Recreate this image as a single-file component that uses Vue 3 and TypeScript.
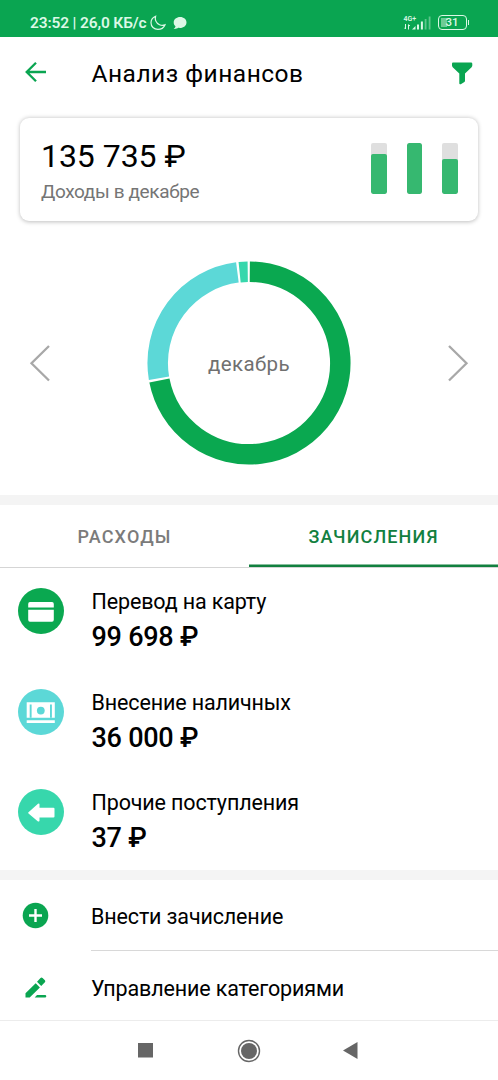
<script setup lang="ts">
interface Income {
  id: 'card' | 'cash' | 'other'
  label: string
  amount: string
}

interface Segment {
  path: string
  color: string
}

const incomes: Income[] = [
  { id: 'card', label: 'Перевод на карту', amount: '99 698 ₽' },
  { id: 'cash', label: 'Внесение наличных', amount: '36 000 ₽' },
  { id: 'other', label: 'Прочие поступления', amount: '37 ₽' },
]

const months: { name: string; level: number }[] = [
  { name: 'oct', level: 78.5 },
  { name: 'nov', level: 100 },
  { name: 'dec', level: 69.5 },
]

const CENTER = 102
const RADIUS = 91.3

function arc(from: number, to: number): string {
  const point = (deg: number): string => {
    const a = ((deg - 90) * Math.PI) / 180
    return `${(CENTER + RADIUS * Math.cos(a)).toFixed(2)} ${(CENTER + RADIUS * Math.sin(a)).toFixed(2)}`
  }
  return `M${point(from)}A${RADIUS} ${RADIUS} 0 ${to - from > 180 ? 1 : 0} 1 ${point(to)}`
}

const segments: Segment[] = [
  { path: arc(0.5, 258.9), color: '#0aa850' },
  { path: arc(260.4, 352.7), color: '#5cd8d7' },
  { path: arc(354.1, 359.2), color: '#37d7ac' },
]
</script>

<template>
  <div class="screen">
    <div class="status">
      <span class="clock">23:52 | 26,0 КБ/с</span>
      <svg class="moon" width="16" height="16" viewBox="0 0 16 16">
        <path d="M5.600 1.200C3 2.300 1 4.600 1 7.700C1 11.600 4 14.400 7.900 14.400C11.200 14.400 13.800 12.600 14.900 9.900C12.900 10.700 11.200 10.500 9.500 9.700C6.200 8.100 4.800 4.500 5.600 1.200Z" />
      </svg>
      <svg class="bubble" width="14" height="14" viewBox="0 0 14 14">
        <path d="M7.200 1C3.600 1 .7 3.300.7 6.400C.7 8 1.400 9.300 2.500 10.300C2.400 11.500 1.600 12.400.6 12.900C2.500 13.100 4.200 12.700 5.300 11.800C10 12.500 13.500 9.800 13.500 6.400C13.500 3.300 10.700 1 7.200 1Z" />
      </svg>
      <div class="status-right">
        <div class="net">
          <span class="gen">4G+</span>
          <svg width="8" height="6" viewBox="0 0 8 6"><path d="M1.500 0V5M.3 3.700L1.500 5M4.500 5.500V.7L6 2" /></svg>
        </div>
        <svg class="signal" width="20" height="15" viewBox="0 0 20 15">
          <path d="M0 14.500L3.500 11V14.500Z" />
          <rect x="5" y="9.500" width="2" height="5" />
          <rect x="8.900" y="6.500" width="2" height="8" />
          <rect x="12.700" y="4" width="1.800" height="10.500" opacity=".4" />
          <rect x="16.700" y="1.500" width="1.800" height="13" opacity=".4" />
        </svg>
        <div class="battery"><span class="charge"></span><span class="percent">31</span></div>
        <span class="tip"></span>
      </div>
    </div>

    <header class="header">
      <svg class="back" width="22" height="22" viewBox="0 0 22 22"><path d="M21 11H2M11 1.700L1.700 11L11 20.300" /></svg>
      <h1 class="title">Анализ финансов</h1>
      <svg class="filter" width="22" height="23" viewBox="0 0 22 23">
        <path d="M2 .5H20Q21.300.5 21.300 1.800V3.600Q21.300 4.500 20.600 5.200L14 11.500V18.800Q14 19.500 13.400 20L9.800 22.200Q8.300 22.800 8.300 21.300V11.500L1.700 5.200Q1 4.500 1 3.600V1.800Q1 .5 2 .5Z" />
      </svg>
    </header>

    <section class="card">
      <div>
        <div class="total">135 735 ₽</div>
        <div class="caption">Доходы в декабре</div>
      </div>
      <div class="bars">
        <div v-for="m in months" :key="m.name" class="bar">
          <div class="fill" :style="{ height: m.level + '%' }"></div>
        </div>
      </div>
    </section>

    <section class="chart">
      <svg class="chevron" width="22" height="38" viewBox="0 0 22 38"><path d="M20 2L2.500 19.300L20 36.500" /></svg>
      <div class="donut">
        <svg width="204" height="204" viewBox="0 0 204 204">
          <path v-for="s in segments" :key="s.color" :d="s.path" :stroke="s.color" />
        </svg>
        <span class="month">декабрь</span>
      </div>
      <svg class="chevron" width="22" height="38" viewBox="0 0 22 38"><path d="M2 2L19.500 19.300L2 36.500" /></svg>
    </section>

    <div class="band"></div>

    <nav class="tabs">
      <div class="tab">РАСХОДЫ</div>
      <div class="tab active">ЗАЧИСЛЕНИЯ</div>
    </nav>

    <section class="incomes">
      <div v-for="item in incomes" :key="item.id" class="income">
        <div class="badge" :class="'badge-' + item.id">
          <svg v-if="item.id === 'card'" width="46" height="46" viewBox="0 0 46 46">
            <path d="M12 14H34Q35.800 14 35.800 16V19.500H10.200V16Q10.200 14 12 14ZM10.200 21.800H35.800V31.800Q35.800 33.800 34 33.800H12Q10.200 33.800 10.200 31.800Z" />
          </svg>
          <svg v-else-if="item.id === 'cash'" width="46" height="46" viewBox="0 0 46 46">
            <path d="M8.700 13.300H36.800V28.700H8.700ZM8.700 31.300H36.800V33.900H8.700Z" />
            <path class="bill-mark" d="M11.700 15.500H13.600V28.700H11.700ZM32 15.500H33.900V28.700H32Z" />
            <circle class="bill-mark" cx="22.800" cy="21.600" r="3.900" />
          </svg>
          <svg v-else width="46" height="46" viewBox="0 0 46 46">
            <path d="M10.500 23.300L20 14.800Q21.500 14 21.500 15.500V18.800H35.500Q36.500 18.800 36.500 19.800V27.500Q36.500 28.500 35.500 28.500H21.500V31.500Q21.500 33 20 32.400L10.500 24.500Q9.700 23.900 10.500 23.300Z" />
          </svg>
        </div>
        <div class="texts">
          <div class="label">{{ item.label }}</div>
          <div class="amount">{{ item.amount }}</div>
        </div>
      </div>
    </section>

    <div class="band"></div>

    <section class="actions">
      <div class="action">
        <svg width="27" height="27" viewBox="0 0 27 27">
          <circle cx="13.500" cy="13.500" r="12.800" />
          <path class="plus" d="M13.500 7V20M7 13.500H20" />
        </svg>
        <span class="action-text add">Внести зачисление</span>
      </div>
      <div class="action manage">
        <svg width="27" height="27" viewBox="0 0 27 27">
          <path d="M3.500 22.500V18.300L13.700 8.200L17.900 12.400L7.700 22.500ZM15 6.700L18.500 3Q19.600 2.100 20.600 3L22.900 5.300Q23.800 6.300 22.900 7.300L19.200 11ZM15 20.100H23Q24.300 20.100 24.300 21.300T23 22.500H12.700Z" />
        </svg>
        <span class="action-text">Управление категориями</span>
      </div>
    </section>

    <footer class="navbar">
      <svg width="15" height="15" viewBox="0 0 15 15"><rect width="15" height="14.500" /></svg>
      <svg class="home" width="24" height="24" viewBox="0 0 24 24"><circle cx="12" cy="12" r="8" /><circle class="ring" cx="12" cy="12" r="10.500" /></svg>
      <svg width="15" height="17" viewBox="0 0 15 17"><path d="M0 8.500L14.500 0V17Z" /></svg>
    </footer>
  </div>
</template>

<style>
body {
  margin: 0;
  background: #fff;
}
</style>

<style scoped>
.screen {
  width: 498px;
  height: 1080px;
  overflow: hidden;
  background: #fff;
  color: #000;
  font-family: Roboto, "Noto Sans", sans-serif;
  display: flex;
  flex-direction: column;
}
.screen > * {
  flex: none;
  box-sizing: border-box;
}
svg {
  display: block;
  flex: none;
}
.status {
  height: 37px;
  padding: 8px 29px 0 30px;
  background: #0aa551;
  color: #dcf8e6;
  display: flex;
  align-items: center;
}
.clock {
  width: 120px;
  font-size: 15.500px;
  font-weight: 600;
  letter-spacing: -0.150px;
  white-space: nowrap;
}
.moon {
  fill: none;
  stroke: #dcf8e6;
  stroke-width: 1.200;
}
.bubble {
  margin-left: 7px;
  fill: #dcf8e6;
}
.status-right {
  margin-left: auto;
  display: flex;
  align-items: center;
}
.net {
  width: 15px;
  margin-right: -7px;
}
.gen {
  display: block;
  font-size: 7px;
  line-height: 7px;
  font-weight: 600;
}
.net svg {
  margin-top: 1px;
  fill: none;
  stroke: #dcf8e6;
  stroke-width: 1;
}
.signal {
  fill: #dcf8e6;
  margin-right: 6px;
}
.battery {
  position: relative;
  box-sizing: border-box;
  width: 29px;
  height: 15px;
  border: 1.500px solid #dcf8e6;
  border-radius: 4px;
  display: flex;
  align-items: center;
  justify-content: center;
}
.charge {
  position: absolute;
  left: 2px;
  top: 2px;
  bottom: 2px;
  width: 6px;
  background: #6dcb95;
}
.percent {
  position: relative;
  font-size: 11.500px;
  line-height: 13px;
  font-weight: 500;
}
.tip {
  width: 1.500px;
  height: 5px;
  margin-left: 1px;
  background: #dcf8e6;
}
.header {
  height: 81px;
  padding: 0 25px;
  display: flex;
  align-items: flex-start;
}
.back {
  margin-top: 24px;
  fill: none;
  stroke: #0aa551;
  stroke-width: 2.300;
}
.title {
  margin: 22px 0 0 44.500px;
  font-size: 24.500px;
  line-height: 30px;
  font-weight: 400;
  letter-spacing: 0.500px;
  white-space: nowrap;
}
.filter {
  margin: 24.500px 0 0 auto;
  fill: #0aa551;
}
.card {
  height: 103px;
  margin: 0 20px;
  padding: 18px 20px 0 21px;
  border-radius: 9px;
  box-shadow: 0 0.500px 4px rgba(0, 0, 0, 0.26);
  display: flex;
  justify-content: space-between;
}
.total {
  font-size: 32px;
  line-height: 40px;
  letter-spacing: -0.050px;
  white-space: nowrap;
}
.caption {
  margin-top: 4px;
  font-size: 19px;
  line-height: 24px;
  letter-spacing: -0.370px;
  color: #757575;
  white-space: nowrap;
}
.bars {
  margin-top: 7px;
  height: 51px;
  display: flex;
  gap: 19.800px;
}
.bar {
  width: 15.800px;
  display: flex;
  align-items: flex-end;
  background: #dfdfdf;
  border-radius: 2px;
  overflow: hidden;
}
.fill {
  width: 100%;
  background: #36b870;
  border-radius: 2px;
}
.chart {
  height: 274px;
  padding: 40px 29px 0;
  display: flex;
  justify-content: space-between;
}
.chevron {
  margin-top: 83px;
  fill: none;
  stroke: #a8a8a8;
  stroke-width: 2.300;
}
.donut {
  width: 204px;
  height: 204px;
  display: grid;
  place-items: center;
}
.donut > * {
  grid-area: 1 / 1;
}
.donut path {
  fill: none;
  stroke-width: 20.500;
}
.month {
  margin-top: 2px;
  font-size: 20.500px;
  line-height: 26px;
  letter-spacing: 0.400px;
  color: #707070;
}
.band {
  height: 10px;
  background: #f4f4f4;
}
.tabs {
  height: 63px;
  display: flex;
}
.tab {
  box-sizing: border-box;
  width: 249px;
  border-bottom: 1px solid #d5d5d5;
  text-align: center;
  font-size: 18px;
  line-height: 64px;
  font-weight: 500;
  letter-spacing: 1.150px;
  color: #7b7b7b;
}
.tab.active {
  color: #12803f;
  box-shadow: inset 0 -2.500px #12803f;
}
.incomes {
  height: 302px;
}
.income {
  height: 100.700px;
  display: flex;
}
.badge {
  width: 46px;
  height: 46px;
  margin: 20px 27.500px 0 18px;
  border-radius: 50%;
}
.badge svg {
  fill: #fff;
}
.badge-card {
  background: #0aa850;
}
.badge-cash {
  background: #5cd8d7;
}
.badge-other {
  background: #37d7ac;
}
.bill-mark {
  fill: #5cd8d7;
}
.texts {
  padding-top: 20px;
}
.label {
  font-size: 21.500px;
  line-height: 28px;
  letter-spacing: -0.140px;
  white-space: nowrap;
}
.amount {
  margin-top: 6px;
  font-size: 27px;
  line-height: 30px;
  font-weight: 500;
  letter-spacing: -0.250px;
  white-space: nowrap;
}
.actions {
  height: 140px;
}
.action {
  height: 71px;
  padding-left: 22px;
  display: flex;
  align-items: center;
}
.action.manage {
  height: 69px;
  padding-top: 6px;
  box-sizing: border-box;
}
.action svg {
  fill: #0aa551;
}
.action .plus {
  stroke: #fff;
  stroke-width: 2.400;
}
.action-text {
  margin-left: 42px;
  flex: 1;
  font-size: 21.500px;
  line-height: 72px;
  letter-spacing: -0.140px;
  white-space: nowrap;
}
.action-text.add {
  box-sizing: border-box;
  height: 71px;
  line-height: 73px;
  border-bottom: 1px solid #d8d8d8;
}
.navbar {
  height: 60px;
  padding: 0 140px 0 138px;
  border-top: 1px solid #ececec;
  display: flex;
  align-items: center;
  justify-content: space-between;
  fill: #666;
}
.home {
  margin-left: 2px;
}
.ring {
  fill: none;
  stroke: #666;
  stroke-width: 1.400;
}
</style>
